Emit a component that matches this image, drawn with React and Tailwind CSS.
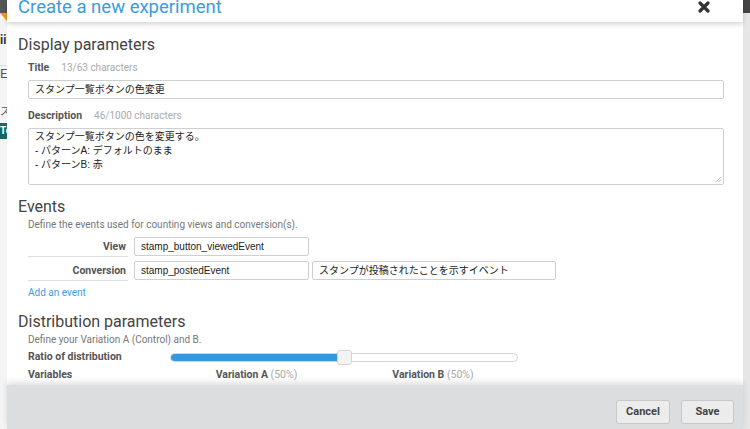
import React from "react";

const font = { fontFamily: "Roboto, 'Noto Sans CJK JP', sans-serif" };
const inputFont = { fontFamily: "'Liberation Sans', 'Noto Sans CJK JP', sans-serif" };

const Label = ({ children, note }) => (
  <div className="flex items-baseline gap-[12px] text-[10px] leading-[14px]">
    <span className="font-bold text-[10.5px] text-[#555]">{children}</span>
    <span className="text-[#aaa]">{note}</span>
  </div>
);

const Field = ({ value, className = "" }) => (
  <div
    className={`h-[19px] border border-[#cfcfcf] rounded-[2px] bg-white px-[6px] text-[10px] leading-[17px] text-[#222] whitespace-nowrap overflow-hidden ${className}`}
    style={inputFont}
  >
    {value}
  </div>
);

const EventRow = ({ label, value, note }) => (
  <div className="flex items-start h-[24px]">
    <div className="w-[100px] h-[20px] border-b border-[#ddd] text-right pr-[2px] text-[10.5px] font-bold text-[#555] leading-[19px]">
      {label}
    </div>
    <Field value={value} className="ml-[6px] w-[175px]" />
    {note && <Field value={note} className="ml-[3px] w-[244px]" />}
  </div>
);

export default function App() {
  return (
    <div className="w-[750px] h-[429px] overflow-hidden flex bg-[#ececec]" style={font}>
      {/* page behind the modal */}
      <div className="w-[7px] flex flex-col text-[10px] text-[#555] overflow-hidden">
        <div className="h-[13px] bg-[#555]" />
        <div className="h-[10px] bg-[#f4f4f4] relative">
          <div className="absolute left-0 top-0 w-0 h-0 border-l-[7px] border-l-transparent border-t-[8px] border-t-[#f39c12]" />
        </div>
        <div className="h-[42px] bg-[#f4f4f4] pt-[10px] font-bold text-[#333] text-[12px] leading-[14px]">ii</div>
        <div className="h-[40px] bg-[#f4f4f4] border-t border-[#ddd] text-[13px] leading-[16px]">E</div>
        <div className="h-[18px] bg-[#f4f4f4] leading-[14px]">ス</div>
        <div className="h-[16px] bg-[#0f6b5e] text-white font-bold leading-[16px]">Te</div>
        <div className="flex-1 bg-[#f4f4f4]" />
      </div>

      {/* modal */}
      <div className="w-[736px] h-full flex flex-col bg-white relative">
        <div className="h-[22px] relative z-10 bg-white shadow-[0_2px_5px_rgba(0,0,0,0.18)] flex items-start justify-between pl-[11px] pr-[33px] overflow-hidden">
          <span className="text-[18.5px] leading-[20px] -mt-[3px] text-[#3b9be0]">Create a new experiment</span>
          <svg width="12" height="12" viewBox="0 0 12 12" className="mt-[1px]">
            <path d="M2 2 L10 10 M10 2 L2 10" stroke="#333" strokeWidth="3.2" strokeLinecap="round" />
          </svg>
        </div>

        <div className="flex-1 overflow-hidden pl-[11px] pr-[20px] text-[#444]">
          <h2 className="text-[16px] leading-[20px] mt-[13px] text-[#444]">Display parameters</h2>
          <div className="pl-[10px] mt-[6px]">
            <Label note="13/63 characters">Title</Label>
            <Field value="スタンプ一覧ボタンの色変更" className="mt-[5px] w-[696px]" />
            <div className="mt-[10px]">
              <Label note="46/1000 characters">Description</Label>
            </div>
            <div
              className="relative mt-[5px] w-[696px] h-[57px] border border-[#cfcfcf] rounded-[2px] px-[6px] py-[1px] text-[10px] leading-[14px] text-[#222]"
              style={inputFont}
            >
              <div>スタンプ一覧ボタンの色を変更する。</div>
              <div>- パターンA: デフォルトのまま</div>
              <div>- パターンB: 赤</div>
              <svg width="7" height="7" viewBox="0 0 7 7" className="absolute right-[1px] bottom-[1px]">
                <path d="M6 1 L1 6 M6 3.5 L3.5 6" stroke="#aaa" strokeWidth="0.8" />
              </svg>
            </div>
          </div>

          <h2 className="text-[16px] leading-[20px] mt-[12px] text-[#444]">Events</h2>
          <div className="pl-[10px]">
            <p className="text-[10px] leading-[14px] text-[#777] mt-[1px]">Define the events used for counting views and conversion(s).</p>
            <div className="mt-[5px]">
              <EventRow label="View" value="stamp_button_viewedEvent" />
              <EventRow label="Conversion" value="stamp_postedEvent" note="スタンプが投稿されたことを示すイベント" />
            </div>
            <a className="block text-[10px] leading-[14px] text-[#3b9be0] mt-[1px]">Add an event</a>
          </div>

          <h2 className="text-[16px] leading-[20px] mt-[12px] text-[#444]">Distribution parameters</h2>
          <div className="pl-[10px]">
            <p className="text-[10px] leading-[14px] text-[#777] mt-[1px]">Define your Variation A (Control) and B.</p>
            <div className="flex items-center mt-[2px] h-[16px]">
              <span className="w-[142px] text-[10.5px] font-bold text-[#555]">Ratio of distribution</span>
              <div className="relative w-[348px] h-[9px] rounded-full border border-[#d5d5d5] bg-white">
                <div className="h-full w-[172px] rounded-l-full bg-[#3498db]" />
                <div className="absolute left-[166px] -top-[4px] w-[15px] h-[15px] rounded-[3px] border border-[#d5d5d5] bg-[#f3f3f3]" />
              </div>
            </div>
            <div className="flex mt-[3px] text-[10.5px] leading-[14px]">
              <span className="w-[142px] font-bold text-[#555]">Variables</span>
              <span className="w-[173px] text-center font-bold text-[#555]">
                Variation A <span className="font-normal text-[#aaa]">(50%)</span>
              </span>
              <span className="w-[180px] text-center font-bold text-[#555]">
                Variation B <span className="font-normal text-[#aaa]">(50%)</span>
              </span>
            </div>
            <div className="flex gap-[4px] mt-[5px]">
              <Field value="" className="w-[139px]" />
              <Field value="" className="w-[173px]" />
              <Field value="" className="w-[173px]" />
            </div>
          </div>
        </div>

        <div className="absolute left-0 right-0 bottom-0 h-[44px] bg-[#dcddde] shadow-[0_-3px_6px_rgba(0,0,0,0.12)] flex items-start justify-end gap-[11px] pr-[9px] pt-[15px]">
          <button className="w-[54px] h-[24px] rounded-[3px] border border-[#c8c8c8] bg-[#ececec] text-[11px] font-bold text-[#444]">Cancel</button>
          <button className="w-[53px] h-[24px] rounded-[3px] border border-[#c8c8c8] bg-[#ececec] text-[11px] font-bold text-[#444]">Save</button>
        </div>
      </div>

      <div className="w-[7px] flex flex-col">
        <div className="h-[13px] bg-[#444]" />
        <div className="flex-1 bg-[#e6e6e6]" />
      </div>
    </div>
  );
}
